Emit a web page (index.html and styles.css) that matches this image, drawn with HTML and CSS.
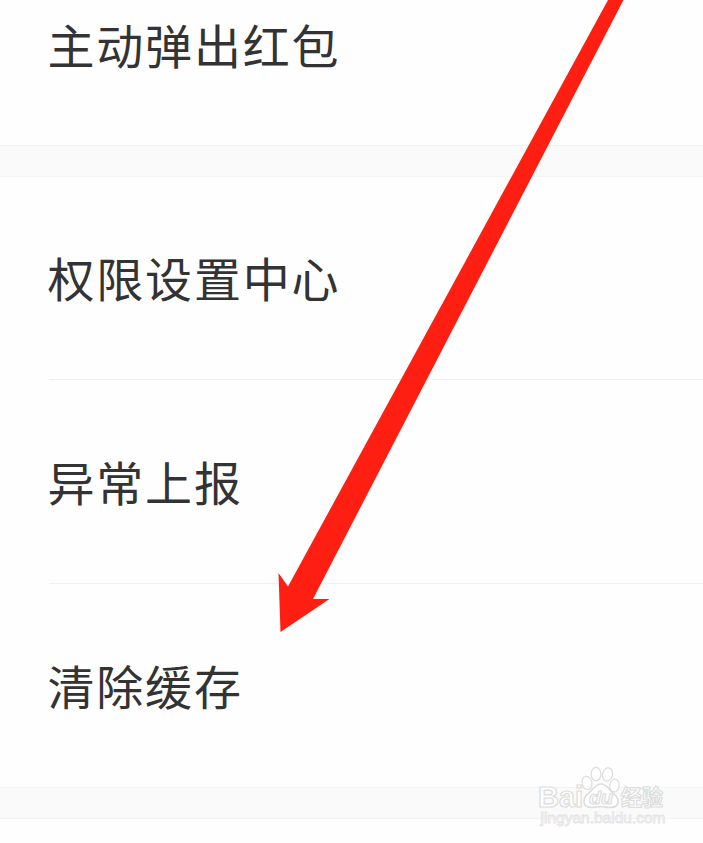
FILE: index.html
```html
<!DOCTYPE html>
<html lang="zh-CN">
<head>
<meta charset="utf-8">
<title>设置</title>
<link rel="stylesheet" href="styles.css">
</head>
<body>
<main class="screen">
  <section class="group group-first">
    <div class="row"><span class="label">主动弹出红包</span></div>
  </section>
  <div class="divider"></div>
  <section class="group">
    <div class="row"><span class="label">权限设置中心</span></div>
    <div class="row"><span class="label">异常上报</span></div>
    <div class="row"><span class="label">清除缓存</span></div>
  </section>
  <div class="divider"></div>
  <svg class="arrow" width="703" height="843" viewBox="0 0 703 843" aria-hidden="true">
    <path d="M608 0H623.500L313 599H329.500L280.500 632L278.500 573L288 586.500Z"/>
  </svg>
  <svg class="watermark" width="140" height="70" viewBox="0 0 140 70" aria-hidden="true">
    <g class="outline">
      <text class="brand" x="6" y="42" textLength="45" lengthAdjust="spacingAndGlyphs">Bai</text>
      <ellipse cx="55" cy="18" rx="4.900" ry="6.800" transform="rotate(-12 55 18)"/>
      <ellipse cx="64" cy="9" rx="4.900" ry="6.700"/>
      <ellipse cx="75.500" cy="9.500" rx="4.900" ry="6.700" transform="rotate(12 75.500 9.500)"/>
      <ellipse cx="82.500" cy="20.500" rx="4.600" ry="6.500" transform="rotate(10 82.500 20.500)"/>
      <path class="pad" d="M69 19C63 19 61 25 57 28C51 32 50.500 39 55 41.500C60 44 64 41.500 69 41.500S79 44.500 84 41C88 37 86 32 81 28C76 24 75 19 69 19Z"/>
      <text class="du" x="57" y="39" textLength="24" lengthAdjust="spacingAndGlyphs">du</text>
      <text class="cjk" x="89" y="39.500" textLength="42" lengthAdjust="spacingAndGlyphs">经验</text>
    </g>
    <text class="site" x="8.500" y="58" textLength="125" lengthAdjust="spacingAndGlyphs">jingyan.baidu.com</text>
  </svg>
</main>
</body>
</html>
```
FILE: styles.css
```css
* { box-sizing: border-box; }

body {
  margin: 0;
  background: #fefefe;
  font-family: "Noto Sans CJK SC", sans-serif;
  color: #333;
}

.screen {
  position: relative;
  height: 843px;
  overflow: hidden;
}

.group { padding-left: 49px; }

.row {
  display: flex;
  align-items: center;
  height: 204px;
  padding-bottom: 2px;
}

.row + .row { border-top: 1px solid #f0f0f0; }

.group:not(.group-first) .row:first-child { height: 202px; }

.group-first .row {
  height: 145px;
  padding-bottom: 58px;
}

.label {
  margin-left: -1.5px;
  font-size: 47px;
  line-height: 60px;
  letter-spacing: 1.8px;
  white-space: nowrap;
}

.divider {
  height: 32px;
  background: #fafafa;
  border-top: 1px solid #f3f3f3;
  border-bottom: 1px solid #f3f3f3;
}

.arrow {
  position: absolute;
  top: 0;
  left: 0;
  fill: #ff1f12;
}

.watermark {
  position: absolute;
  top: 765px;
  left: 532px;
}

.outline {
  fill: #fff;
  stroke: #dcdcdc;
  stroke-width: 1.2px;
}

.pad { stroke-width: 1.6px; }

.brand, .du, .site {
  font-family: "Liberation Sans", sans-serif;
  font-weight: 700;
}

.brand { font-size: 30px; }

.du {
  font-size: 19px;
  font-style: italic;
}

.cjk {
  font-size: 22px;
  font-weight: 700;
}

.site {
  font-size: 14px;
  font-weight: 400;
  fill: #fff;
  stroke: #e4e4e4;
  stroke-width: 0.8px;
}
```
